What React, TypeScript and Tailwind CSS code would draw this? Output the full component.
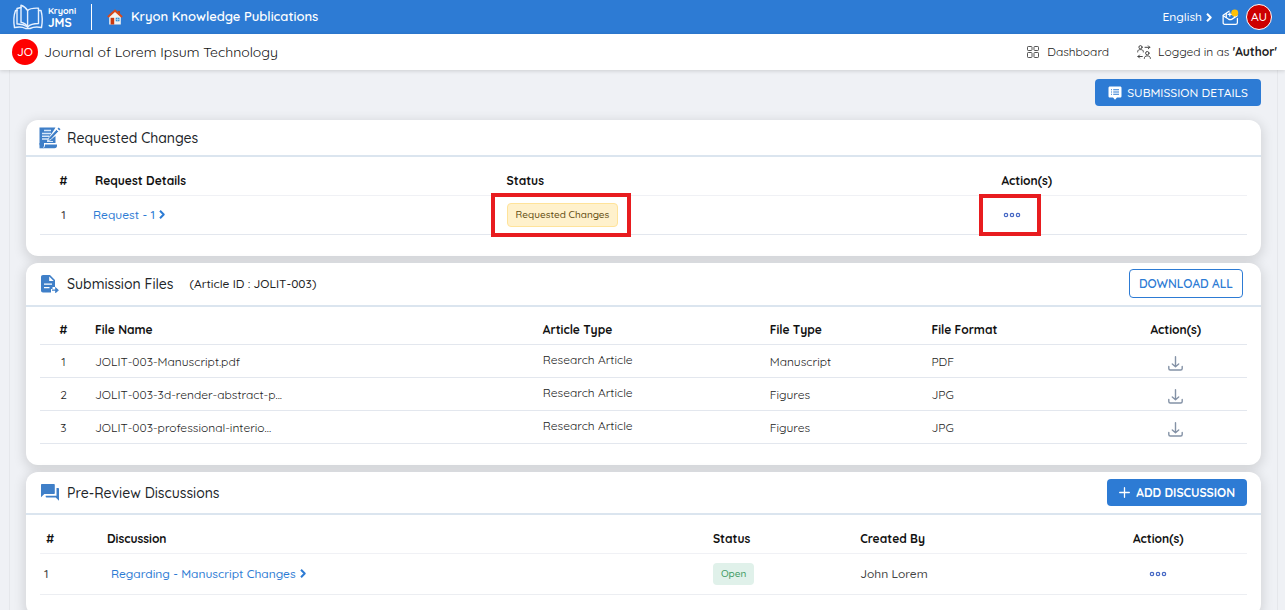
import React from "react";

interface SubmissionFile {
    id: number;
    name: string;
    articleType: string;
    fileType: string;
    format: string;
}

const files: SubmissionFile[] = [
    {id: 1, name: "JOLIT-003-Manuscript.pdf", articleType: "Research Article", fileType: "Manuscript", format: "PDF"},
    {id: 2, name: "JOLIT-003-3d-render-abstract-p...", articleType: "Research Article", fileType: "Figures", format: "JPG"},
    {id: 3, name: "JOLIT-003-professional-interio...", articleType: "Research Article", fileType: "Figures", format: "JPG"},
];

const LogoIcon = () => (
    <svg width="32" height="26" viewBox="0 0 32 26" fill="none" stroke="#e6f1ff" strokeWidth="1.4" strokeLinejoin="round" strokeLinecap="round">
        <path d="M9 1.2C12 2 14 4 15.600 6.500V23C14 20 11.500 18.700 9 18.200Z"/>
        <path d="M15.600 6.500C17.500 4.500 21.500 4 26.500 4.200V19.500C21.500 19.500 18 20.500 15.600 23"/>
        <path d="M9 3.500L5 4.500V20C9 19.800 12.500 20.800 15.600 23"/>
        <path d="M5 6.500H3.500C1.500 12 1.500 18 2.500 23.500C7 22.600 11 23 13.500 24.500H18C21 23 25 22.600 29.500 23.500C30.500 18 30.500 12 29 6.500H26.500"/>
    </svg>
);

const HomeIcon = () => (
    <svg width="16" height="16" viewBox="0 0 16 16">
        <path d="M2.200 7.500L8 2.200L13.800 7.500V15.500H2.200Z" fill="#f3f3f1"/>
        <path d="M11 2H13V6H11Z" fill="#b9461f"/>
        <path d="M8 0.300L0.200 7.300L1.600 8.800L8 3.100L14.400 8.800L15.800 7.300Z" fill="#d84a1b"/>
        <path d="M3.600 8.800H7.200V15.500H3.600Z" fill="#c9380f"/>
        <path d="M8.700 8.700H12.500V12.300H8.700Z" fill="#2f91d8"/>
        <path d="M10.600 8.700V12.300M8.700 10.500H12.500" stroke="#bfe3fa" strokeWidth="0.6"/>
    </svg>
);

const MailIcon = () => (
    <svg width="17" height="17" viewBox="0 0 18 18" fill="none" stroke="#fff" strokeWidth="1.3" strokeLinecap="round" strokeLinejoin="round">
        <path d="M16.300 10V14.500C16.300 15.600 15.600 16.300 14.500 16.300H3C1.900 16.300 1.200 15.600 1.200 14.500V6.700L7.500 2.300"/>
        <path d="M1.300 7.200L6.800 10.700C8 11.400 9.400 11.400 10.600 10.700L16.200 7.200"/>
        <path d="M4.500 9V4.700M8.300 4V7.500M6.500 5.700H10M13.200 8.800V6"/>
        <circle cx="13.500" cy="4.300" r="3.700" fill="#ffc107" stroke="none"/>
    </svg>
);

const GridIcon = () => (
    <svg width="12" height="12" viewBox="0 0 12 12" fill="none" stroke="#555" strokeWidth="1">
        <rect x="0.500" y="0.500" width="4.500" height="4" rx="0.700"/>
        <rect x="7" y="0.500" width="4.500" height="4" rx="0.700"/>
        <rect x="0.500" y="6.500" width="4.500" height="5" rx="0.700"/>
        <rect x="7" y="6.500" width="4.500" height="5" rx="0.700"/>
    </svg>
);

const SwitchUserIcon = () => (
    <svg width="14" height="14" viewBox="0 0 14 14" fill="none" stroke="#444" strokeWidth="1" strokeLinecap="round" strokeLinejoin="round">
        <circle cx="3.500" cy="2.200" r="1.600"/>
        <path d="M0.700 7V6.500C0.700 5.200 1.800 4.600 3.500 4.600S6.300 5.200 6.300 6.500V7"/>
        <circle cx="10.300" cy="8.200" r="1.700"/>
        <path d="M7.300 13.400C7.300 11.600 8.500 10.900 10.300 10.900S13.400 11.600 13.400 13.400"/>
        <path d="M8 2.300H12.800M11.300 0.800L12.800 2.300L11.300 3.800"/>
        <path d="M5.300 11.500H1M2.500 10L1 11.500L2.500 13"/>
    </svg>
);

const NotesIcon = () => (
    <svg width="14" height="14" viewBox="0 0 14 14">
        <path d="M2 0.500H12C13 0.500 13.500 1 13.500 2V10C13.500 11 13 11.500 12 11.500H9L7 13.800L5 11.500H2C1 11.500 0.500 11 0.500 10V2C0.500 1 1 0.500 2 0.500Z" fill="#fff"/>
        <path d="M3 3.700H4M5.200 3.700H11M3 6H4M5.200 6H11M3 8.300H4M5.200 8.300H11" stroke="#2d7bd4" strokeWidth="1.1"/>
    </svg>
);

const RequestIcon = () => (
    <svg width="22" height="22" viewBox="0 0 22 22">
        <path d="M0.500 0.500H16.500L15 3L11 9L12 12L16.500 9V16H5V19.500H3.500C1.500 19.500 0.500 18.500 0.500 17Z" fill="#3f7fc8"/>
        <path d="M0.500 16H4.500V21.300H0.500Z" fill="#3f7fc8"/>
        <path d="M6 17.500H18V18.500C18 20.200 17.200 21.300 15.500 21.300H4C5.300 20.800 6 19.500 6 17.500Z" fill="#3f7fc8"/>
        <path d="M5 3.500H12M3 6.500H12M3 9.200H10.500M3 12H9" stroke="#d8e8fa" strokeWidth="1.4"/>
        <path d="M8.500 14L10 10.500L17.500 2.500L19.500 4.500L12 12.500Z" fill="#3f7fc8" stroke="#fff" strokeWidth="0.800"/>
        <path d="M18.500 1.700L19.700 0.500L21.500 2.200L20.300 3.500Z" fill="#3f7fc8"/>
        <path d="M8 14.500H14" stroke="#d8e8fa" strokeWidth="1"/>
    </svg>
);

const FileExportIcon = () => (
    <svg width="18" height="18" viewBox="0 0 18 18">
        <path d="M2 0H9L14 5V12H11.500V14H10V17.500H2C0.800 17.500 0 16.700 0 15.500V2C0 0.800 0.800 0 2 0Z" fill="#3f7fc8"/>
        <path d="M8.200 1.500V6H12.700Z" fill="#fff"/>
        <path d="M3 9.200H11M3 12.700H8.500" stroke="#fff" strokeWidth="1.300"/>
        <path d="M11 15.200H15M14.800 13.200L17 15.200L14.800 17.200Z" fill="#3f7fc8" stroke="#3f7fc8" strokeWidth="1.200"/>
    </svg>
);

const DiscussionIcon = () => (
    <svg width="18" height="17" viewBox="0 0 18 17" fill="#3f7fc8">
        <path d="M0.700 0H13C13.500 0 13.800 0.300 13.800 0.800V9.200C13.800 9.700 13.500 10 13 10H3.300L0 13.200V0.800C0 0.300 0.300 0 0.700 0Z"/>
        <path d="M15.500 4H17.200C17.700 4 18 4.300 18 4.800V16.800L14.700 13.500H5.500C5 13.500 4.700 13.200 4.700 12.700V11.700H15.500Z"/>
    </svg>
);

const DownloadIcon = () => (
    <svg width="15" height="15" viewBox="0 0 15 15" fill="none" stroke="#8492a6" strokeWidth="1.4" strokeLinecap="round" strokeLinejoin="round">
        <path d="M7.500 0.800V10.500M4.300 8L7.500 10.700L10.700 8"/>
        <path d="M0.800 10.500V12.500C0.800 13.500 1.300 14 2.300 14H12.700C13.700 14 14.200 13.500 14.200 12.500V10.500"/>
    </svg>
);

const DotsIcon = () => (
    <svg width="18" height="6" viewBox="0 0 18 6" fill="none" stroke="#4668c5" strokeWidth="1.2">
        <circle cx="3" cy="3" r="1.700"/>
        <circle cx="9" cy="3" r="1.700"/>
        <circle cx="15" cy="3" r="1.700"/>
    </svg>
);

const PlusIcon = () => (
    <svg width="11" height="11" viewBox="0 0 11 11" stroke="#fff" strokeWidth="1.300" strokeLinecap="round">
        <path d="M5.500 0.700V10.300M0.700 5.500H10.300"/>
    </svg>
);

const Chevron = () => (
    <svg width="6" height="9" viewBox="0 0 6 9" fill="none" stroke="currentColor" strokeWidth="2" strokeLinejoin="round">
        <path d="M1 0.800L4.700 4.500L1 8.200"/>
    </svg>
);

interface CardProps {
    icon: React.ReactNode;
    title: string;
    note?: string;
    action?: React.ReactNode;
    headClass: string;
    children: React.ReactNode;
}

const Card: React.FC<CardProps> = ({icon, title, note, action, headClass, children}) => (
    <section className="rounded-xl bg-white shadow-[0_3px_12px_2px_rgba(0,0,0,0.12)]">
        <div className={`flex items-center border-b-2 border-[#dbe5ef] pl-3 ${headClass}`}>
            <span className="flex w-6 shrink-0 justify-center">{icon}</span>
            <h2 className="ml-[5px] text-sm font-medium text-[#212529]">{title}</h2>
            {note && <span className="ml-4 text-xs text-[#222]">{note}</span>}
            <div className="ml-auto flex">{action}</div>
        </div>
        <div className="px-[14px] pb-[21px]">{children}</div>
    </section>
);

const th = "px-2 pt-[10px] text-left font-bold text-[#111]";
const thCenter = "pt-[10px] font-bold text-[#111]";
const td = "px-2";

export default function App() {
    return (
        <div className="flex h-screen flex-col overflow-hidden bg-[#eff1f5] font-['Quicksand','Lato',sans-serif] text-xs font-medium text-[#444]">
            <header className="flex h-[34px] shrink-0 items-center bg-[#2d7bd4] pl-3 pr-[13px] text-white">
                <LogoIcon/>
                <div className="ml-1 flex flex-col font-bold">
                    <span className="text-[9px] leading-[11px]">Kryoni</span>
                    <span className="text-xs leading-[13px]">JMS</span>
                </div>
                <div className="ml-[15px] h-[26px] w-px bg-white"/>
                <a href="#" className="ml-[15px] flex items-center gap-2 text-[13px] font-semibold">
                    <HomeIcon/>
                    Kryon Knowledge Publications
                </a>
                <div className="ml-auto flex items-center">
                    <button type="button" className="flex items-center gap-1">
                        English <Chevron/>
                    </button>
                    <button type="button" aria-label="Messages" className="ml-[10px]"><MailIcon/></button>
                    <button type="button" className="ml-[7px] size-[26px] rounded-full border border-white bg-[#cc0000]">AU</button>
                </div>
            </header>

            <div className="z-10 flex h-9 shrink-0 items-center bg-white pl-3 pr-2 shadow-[0_1px_4px_rgba(0,0,0,0.15)]">
                <span className="flex size-[26px] items-center justify-center rounded-full bg-[#ff0000] text-white">JO</span>
                <h1 className="ml-[6px] text-sm font-normal text-[#111]">Journal of Lorem Ipsum Technology</h1>
                <nav className="ml-auto flex items-center gap-7 font-normal text-[#222]">
                    <a href="#" className="flex items-center gap-2"><GridIcon/>Dashboard</a>
                    <a href="#" className="flex items-center gap-[7px]">
                        <SwitchUserIcon/>
                        <span>Logged in as <b className="text-[#222]">'Author'</b></span>
                    </a>
                </nav>
            </div>

            <main className="ml-[9px] mr-[7px] flex-1 border-x border-[#e5e7eb] px-4 pt-[9px]">
                <div className="mb-[14px] flex justify-end">
                    <button type="button" className="flex h-[27px] items-center gap-[5px] rounded bg-[#2d7bd4] px-[13px] text-white">
                        <NotesIcon/>SUBMISSION DETAILS
                    </button>
                </div>

                <div className="flex flex-col gap-[7px]">
                    <Card icon={<RequestIcon/>} title="Requested Changes" headClass="h-[37px] pr-[18px]">
                        <table className="w-full table-fixed">
                            <colgroup>
                                <col className="w-[47px]"/>
                                <col className="w-[34.1%]"/>
                                <col className="w-[41%]"/>
                                <col/>
                            </colgroup>
                            <thead>
                                <tr className="h-[38px] border-b border-[#f0f1f5]">
                                    <th className={thCenter}>#</th>
                                    <th className={th}>Request Details</th>
                                    <th className={th}>Status</th>
                                    <th className={th}>Action(s)</th>
                                </tr>
                            </thead>
                            <tbody>
                                <tr className="h-[39px] border-b border-[#e3e7ee]">
                                    <td className="text-center">1</td>
                                    <td className="px-[6px]">
                                        <a href="#" className="inline-flex items-center gap-1 text-[#2d7bd4]">Request - 1 <Chevron/></a>
                                    </td>
                                    <td className={td}>
                                        <div className="relative inline-flex align-middle">
                                            <span className="h-6 rounded border border-[#ffe39a] bg-[#fff1cc] px-2 text-[10px] leading-[22px] text-[#5f4c10]">Requested Changes</span>
                                            <div className="pointer-events-none absolute -inset-y-[10px] -left-4 -right-[13px] border-4 border-[#e81c1f]"/>
                                        </div>
                                    </td>
                                    <td className={td}>
                                        <div className="relative ml-[2px] inline-flex align-middle">
                                            <button type="button" aria-label="Request actions"><DotsIcon/></button>
                                            <div className="pointer-events-none absolute -inset-y-[18px] -left-6 -right-5 border-4 border-[#e81c1f]"/>
                                        </div>
                                    </td>
                                </tr>
                            </tbody>
                        </table>
                    </Card>

                    <Card
                        icon={<FileExportIcon/>}
                        title="Submission Files"
                        note="(Article ID : JOLIT-003)"
                        headClass="h-11 pr-[18px]"
                        action={
                            <button type="button" className="h-[29px] rounded border border-[#2d7bd4] px-[9px] font-semibold text-[#2d7bd4]">DOWNLOAD ALL</button>
                        }
                    >
                        <table className="w-full table-fixed">
                            <colgroup>
                                <col className="w-[47px]"/>
                                <col className="w-[37.1%]"/>
                                <col className="w-[18.8%]"/>
                                <col className="w-[13.4%]"/>
                                <col className="w-[15%]"/>
                                <col/>
                            </colgroup>
                            <thead>
                                <tr className="h-[38px] border-b border-[#e3e7ee]">
                                    <th className={thCenter}>#</th>
                                    <th className={th}>File Name</th>
                                    <th className={th}>Article Type</th>
                                    <th className={th}>File Type</th>
                                    <th className={th}>File Format</th>
                                    <th className={thCenter}>Action(s)</th>
                                </tr>
                            </thead>
                            <tbody className="font-normal text-[#222]">
                                {files.map((file) => (
                                    <tr key={file.id} className="h-[33px] border-b border-[#e3e7ee]">
                                        <td className="pt-[2px] text-center">{file.id}</td>
                                        <td className="px-2 pt-[2px]">{file.name}</td>
                                        <td className="px-2 pb-[2px]">{file.articleType}</td>
                                        <td className="px-2 pt-[2px]">{file.fileType}</td>
                                        <td className="px-2 pt-[2px]">{file.format}</td>
                                        <td className="pt-1 text-center">
                                            <button type="button" aria-label={`Download ${file.name}`} className="align-middle"><DownloadIcon/></button>
                                        </td>
                                    </tr>
                                ))}
                            </tbody>
                        </table>
                    </Card>

                    <Card
                        icon={<DiscussionIcon/>}
                        title="Pre-Review Discussions"
                        headClass="h-[43px] pr-[14px]"
                        action={
                            <button type="button" className="flex h-[27px] items-center gap-[6px] rounded bg-[#2d7bd4] px-3 font-bold text-white">
                                <PlusIcon/>ADD DISCUSSION
                            </button>
                        }
                    >
                        <table className="w-full table-fixed">
                            <colgroup>
                                <col className="w-[59px]"/>
                                <col className="w-[50.2%]"/>
                                <col className="w-[12.2%]"/>
                                <col className="w-[18%]"/>
                                <col/>
                            </colgroup>
                            <thead>
                                <tr className="h-[38px] border-b border-[#f0f1f5]">
                                    <th className="pl-[6px] pt-[10px] text-left font-bold text-[#111]">#</th>
                                    <th className={th}>Discussion</th>
                                    <th className={th}>Status</th>
                                    <th className={th}>Created By</th>
                                    <th className={thCenter}>Action(s)</th>
                                </tr>
                            </thead>
                            <tbody>
                                <tr className="h-[41px] border-b border-[#eceef2]">
                                    <td className="pl-1">1</td>
                                    <td className="px-3">
                                        <a href="#" className="inline-flex items-center gap-1 text-[#2d7bd4]">Regarding - Manuscript Changes <Chevron/></a>
                                    </td>
                                    <td className={td}>
                                        <span className="inline-block rounded-sm bg-[#e0f1ea] px-2 text-[10px] leading-[22px] text-[#3c9a62]">Open</span>
                                    </td>
                                    <td className={td}>John Lorem</td>
                                    <td className="text-center">
                                        <button type="button" aria-label="Discussion actions" className="align-middle"><DotsIcon/></button>
                                    </td>
                                </tr>
                            </tbody>
                        </table>
                    </Card>
                </div>
            </main>
        </div>
    );
}
